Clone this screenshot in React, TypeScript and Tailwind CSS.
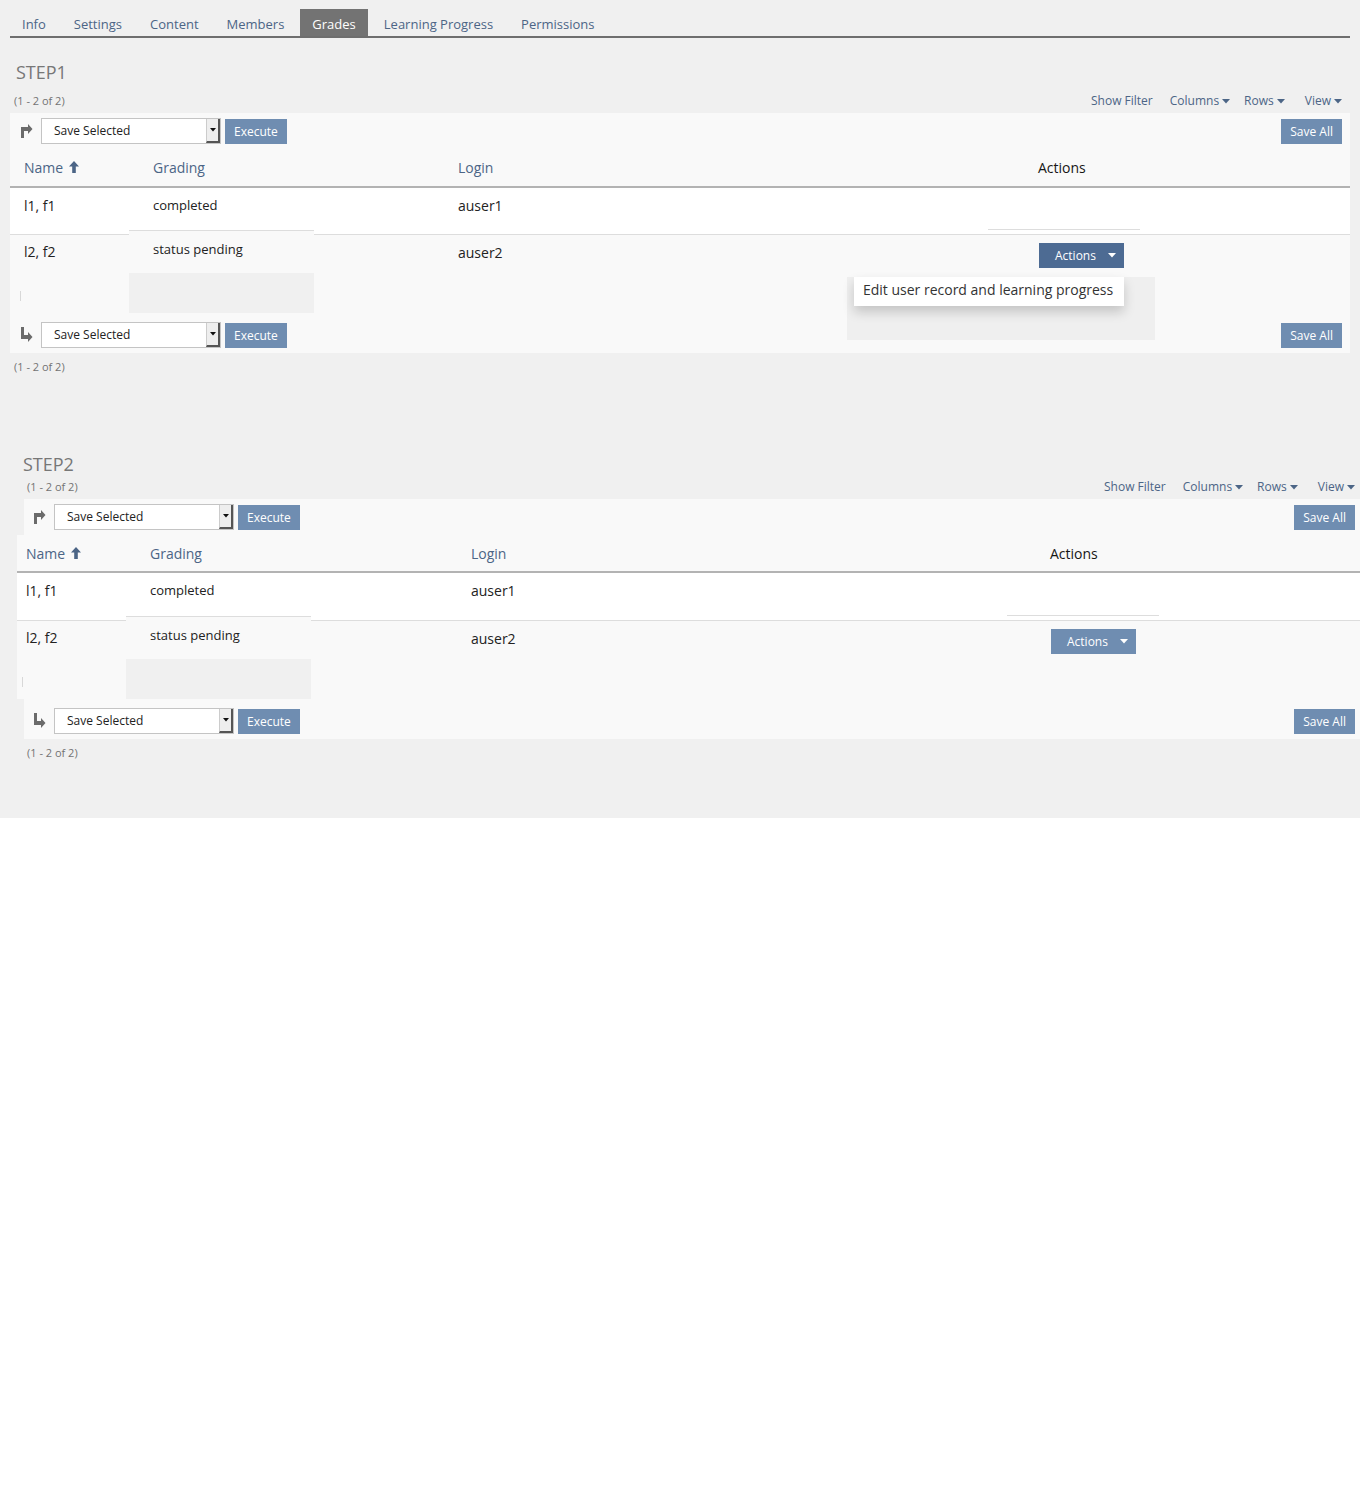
import React from 'react';

interface SectionCfg {
  title: string;
  titleCls: string;
  metaCls: string;
  tableCls: string;
  toolbarCls: string;
  footerCls: string;
  headerCls: string;
  nameColCls: string;
  gradingColCls: string;
  loginColCls: string;
  row1Cls: string;
  row2Cls: string;
  lineCls: string;
  countCls: string;
  menuOpen: boolean;
}

const tabs = ['Info', 'Settings', 'Content', 'Members', 'Grades', 'Learning Progress', 'Permissions'];

const sections: SectionCfg[] = [
  {
    title: 'STEP1',
    titleCls: 'mt-[22px] ml-[16px] h-[24px] text-[18px] leading-[24px] text-[#777]',
    metaCls: 'mt-[9px] ml-[10px] w-[1340px] pl-1 pr-2',
    tableCls: 'mt-[4px] ml-[10px] w-[1340px]',
    toolbarCls: 'h-[35px] pt-[5px] pl-[10px] pr-2',
    footerCls: 'h-[40px] pt-[9px] pl-[10px] pr-2',
    headerCls: 'h-[40px]',
    nameColCls: 'w-[119px] pl-[14px]',
    gradingColCls: 'w-[329px]',
    loginColCls: 'w-[580px]',
    row1Cls: 'h-[47px]',
    row2Cls: 'h-[78px]',
    lineCls: '-ml-[50px]',
    countCls: 'mt-[6px] ml-[14px]',
    menuOpen: true,
  },
  {
    title: 'STEP2',
    titleCls: 'mt-[77px] ml-[23px] h-[24px] text-[18px] leading-[24px] text-[#777]',
    metaCls: 'mt-[3px] ml-[17px] w-[1346px] pl-[10px] pr-2',
    tableCls: 'mt-[4px] ml-[17px] w-[1346px]',
    toolbarCls: 'h-[36px] pt-[5px] ml-[7px] pl-[9px] pr-2',
    footerCls: 'h-[40px] pt-[9px] ml-[7px] pl-[9px] pr-2',
    headerCls: 'h-[38px]',
    nameColCls: 'w-[109px] pl-[9px]',
    gradingColCls: 'w-[345px]',
    loginColCls: 'w-[579px]',
    row1Cls: 'h-[48px]',
    row2Cls: 'h-[78px]',
    lineCls: '-ml-[43px]',
    countCls: 'mt-[6px] ml-[27px]',
    menuOpen: false,
  },
];

const Caret = ({ color = '#4c6586' }: { color?: string }) => (
  <svg width="8" height="5" viewBox="0 0 8 5" className="inline-block">
    <path d="M0 0 H8 L4 4.5 Z" fill={color} />
  </svg>
);

const ArrowUpRight = () => (
  <svg width="13" height="15" viewBox="0 0 13 15">
    <path d="M1 15 V4 H8 V1 L12.5 6 L8 11 V8 H4 V15 Z" fill="#6b6b6b" />
  </svg>
);

const ArrowDownRight = () => (
  <svg width="13" height="15" viewBox="0 0 13 15">
    <path d="M1 0 H4 V8 H8 V5 L12.5 10 L8 15 V12 H1 Z" fill="#6b6b6b" />
  </svg>
);

const SortUp = () => (
  <svg width="10" height="12" viewBox="0 0 10 12" className="ml-[6px]">
    <path d="M5 0 L10 5.5 H6.8 V12 H3.2 V5.5 H0 Z" fill="#4c6586" />
  </svg>
);

const SelectBox = () => (
  <div className="flex h-[26px] w-[180px] border border-[#c4c4c4] bg-white">
    <div className="flex-1 pl-3 text-[12px] leading-[24px] text-[#222]">Save Selected</div>
    <div className="flex w-[14px] items-center justify-center border-l border-[#ccc] border-r-2 border-b-2 border-r-[#555] border-b-[#555] bg-[#eee]">
      <svg width="6" height="4" viewBox="0 0 6 4">
        <path d="M0 0 H6 L3 3.5 Z" fill="#111" />
      </svg>
    </div>
  </div>
);

const Btn = ({ label }: { label: string }) => (
  <button className="h-[25px] bg-[#6f8db1] px-[9px] text-[12px] leading-[25px] text-white">{label}</button>
);

const Toolbar = ({ cls, bottom }: { cls: string; bottom?: boolean }) => (
  <div className={`flex items-start bg-[#f9f9f9] ${cls}`}>
    <div className="mt-[5px] mr-[8px]">{bottom ? <ArrowDownRight /> : <ArrowUpRight />}</div>
    <SelectBox />
    <div className="ml-[4px]">
      <Btn label="Execute" />
    </div>
    <div className="ml-auto">
      <Btn label="Save All" />
    </div>
  </div>
);

function Section({ cfg }: { cfg: SectionCfg }) {
  return (
    <div>
      <h2 className={cfg.titleCls}>{cfg.title}</h2>

      <div className={`flex items-center text-[12px] leading-[16px] ${cfg.metaCls}`}>
        <span className="text-[11px] text-[#737373]">(1 - 2 of 2)</span>
        <div className="ml-auto flex items-center text-[#4c6586]">
          <span>Show Filter</span>
          <span className="ml-[17px] flex items-center gap-[3px]">
            Columns <Caret />
          </span>
          <span className="ml-[14px] flex items-center gap-[3px]">
            Rows <Caret />
          </span>
          <span className="ml-[20px] flex items-center gap-[3px]">
            View <Caret />
          </span>
        </div>
      </div>

      <div className={cfg.tableCls}>
        <Toolbar cls={cfg.toolbarCls} />

        {/* header */}
        <div className={`flex items-center border-b-2 border-[#b3b3b3] bg-[#f9f9f9] text-[14px] ${cfg.headerCls}`}>
          <div className={`flex items-center text-[#4c6586] ${cfg.nameColCls}`}>
            Name <SortUp />
          </div>
          <div className={`pl-6 text-[#4c6586] ${cfg.gradingColCls}`}>Grading</div>
          <div className={`text-[#4c6586] ${cfg.loginColCls}`}>Login</div>
          <div className="text-[#161616]">Actions</div>
        </div>

        {/* row 1 */}
        <div className={`flex border-b border-[#ddd] bg-white text-[14px] text-[#222] ${cfg.row1Cls}`}>
          <div className={`pt-2 leading-[20px] ${cfg.nameColCls}`}>l1, f1</div>
          <div className={`pt-2 pl-6 text-[13px] leading-[18px] ${cfg.gradingColCls}`}>completed</div>
          <div className={`pt-2 leading-[20px] ${cfg.loginColCls}`}>auser1</div>
          <div className="flex flex-1 flex-col">
            <div className={`mt-auto mb-[4px] h-px w-[152px] bg-[#ddd] ${cfg.lineCls}`} />
          </div>
        </div>

        {/* row 2 */}
        <div className={`flex bg-[#f9f9f9] text-[14px] text-[#222] ${cfg.row2Cls}`}>
          <div className={`flex flex-col pt-[7px] leading-[20px] ${cfg.nameColCls}`}>
            <span>l2, f2</span>
            <span className="mt-auto mb-[12px] -ml-[4px] h-[10px] w-px bg-[#d8d8d8]" />
          </div>
          <div className={cfg.gradingColCls}>
            <div className="-mt-[5px] flex h-[83px] w-[185px] flex-col border-t border-[#ddd] bg-[#f9f9f9]">
              <span className="pt-[9px] pl-6 text-[13px] leading-[18px]">status pending</span>
              <div className="mt-auto h-[40px] bg-[#f0f0f0]" />
            </div>
          </div>
          <div className={`pt-[8px] leading-[20px] ${cfg.loginColCls}`}>auser2</div>
          <div className="pt-[8px] pl-px">
            <div className="relative inline-block">
              <button
                className={`flex h-[25px] items-center pl-4 pr-[8px] text-[12px] text-white ${
                  cfg.menuOpen ? 'bg-[#4d6b93]' : 'bg-[#6f8db1]'
                }`}
              >
                Actions
                <span className="ml-[12px] flex">
                  <Caret color="#ffffff" />
                </span>
              </button>
              {cfg.menuOpen && (
                <>
                  <div className="absolute top-[34px] -right-[31px] h-[63px] w-[308px] bg-[#efefef]" />
                  <div className="absolute top-[34px] right-0 z-10 flex h-[29px] w-[270px] items-center whitespace-nowrap bg-white px-[9px] pb-[4px] text-[14px] text-[#333] shadow-[0_6px_12px_rgba(0,0,0,0.18)]">
                    Edit user record and learning progress
                  </div>
                </>
              )}
            </div>
          </div>
        </div>

        <Toolbar cls={cfg.footerCls} bottom />
      </div>

      <div className={`text-[11px] leading-[16px] text-[#737373] ${cfg.countCls}`}>(1 - 2 of 2)</div>
    </div>
  );
}

export default function App() {
  return (
    <div className="min-h-[1500px] w-[1360px] overflow-hidden bg-white font-['Open_Sans',sans-serif]">
      <div className="h-[818px] bg-[#f0f0f0] pt-[9px]">
        <div className="mx-[10px] flex gap-1 border-b-2 border-[#6e6e6e]">
          {tabs.map((t) => (
            <div
              key={t}
              className={`flex h-[27px] items-center px-3 pt-[4px] text-[13px] ${
                t === 'Grades' ? 'bg-[#737373] text-white' : 'text-[#4c6586]'
              }`}
            >
              {t}
            </div>
          ))}
        </div>

        {sections.map((s) => (
          <Section key={s.title} cfg={s} />
        ))}
      </div>
    </div>
  );
}
